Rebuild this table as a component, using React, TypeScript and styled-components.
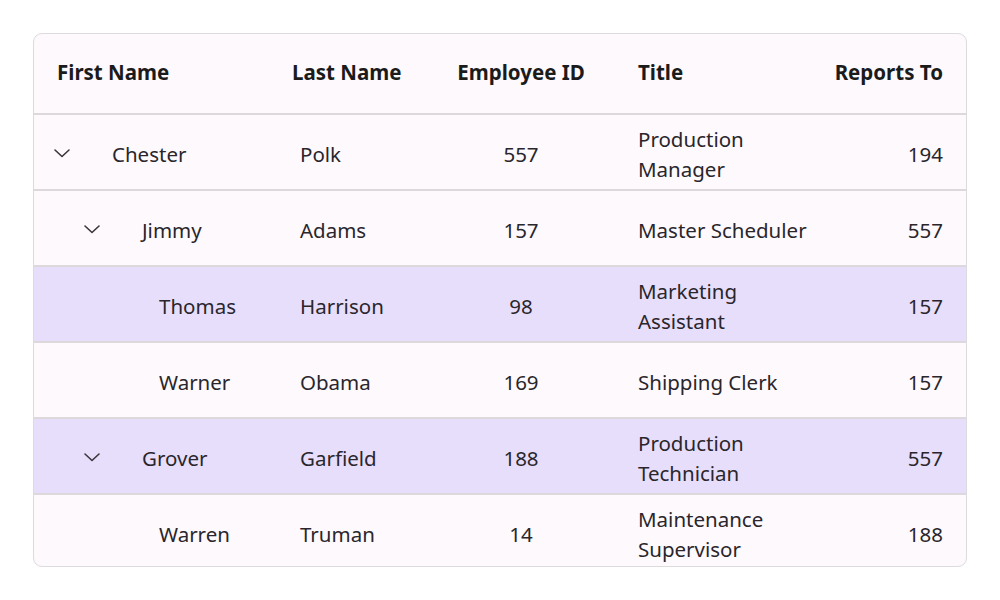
import React from "react";
import styled, { createGlobalStyle } from "styled-components";

const Global = createGlobalStyle`
  html, body { margin: 0; padding: 0; background: #ffffff; }
  body { font-family: "Noto Sans", "Open Sans", sans-serif; }
`;

const Page = styled.div`
  padding: 33px;
`;

const Card = styled.div`
  width: 934px;
  height: 534px;
  box-sizing: border-box;
  border: 1px solid #dedbde;
  border-radius: 9px;
  background: #fdf9fd;
  overflow: hidden;
`;

const cols = "235px 163px 132px 236px 120px";

const HeaderRow = styled.div`
  display: grid;
  grid-template-columns: ${cols};
  align-items: center;
  padding: 0 23px 4px;
  height: 75px;
  border-bottom: 2px solid #dcd8dc;
  font-weight: 700;
  font-size: 20.5px;
  color: #1b1b1b;
`;

const HeadCell = styled.div<{ $align?: string; $pl?: number }>`
  text-align: ${(p) => p.$align || "left"};
  padding-left: ${(p) => p.$pl || 0}px;
  white-space: nowrap;
`;

const Row = styled.div<{ $sel?: boolean }>`
  display: grid;
  grid-template-columns: ${cols};
  align-items: center;
  padding: 4px 23px 0;
  height: 70px;
  border-bottom: 2px solid #dcd8dc;
  background: ${(p) => (p.$sel ? "#e7defc" : "transparent")};
  font-size: 20.5px;
  line-height: 30px;
  color: #2a262b;
  &:last-child { border-bottom: none; }
`;

const Cell = styled.div<{ $align?: string; $pl?: number }>`
  text-align: ${(p) => p.$align || "left"};
  padding-left: ${(p) => p.$pl || 0}px;
`;

const NameCell = styled.div<{ $indent: number }>`
  display: flex;
  align-items: center;
  padding-left: ${(p) => p.$indent}px;
`;

const Expander = styled.span`
  display: inline-flex;
  align-items: center;
  justify-content: center;
  width: 30px;
  margin-left: -10px;
  margin-right: 35px;
  margin-top: -2px;
  color: #3a363b;
`;

const Chevron = () => (
  <svg width="18" height="10" viewBox="0 0 18 10" fill="none">
    <path d="M2 2 L9 8.5 L16 2" stroke="currentColor" strokeWidth="1.6" strokeLinecap="round" strokeLinejoin="round" />
  </svg>
);

type R = { first: string; last: string; id: number; title: string; rep: number; level: number; exp: boolean; sel?: boolean };

const rows: R[] = [
  { first: "Chester", last: "Polk", id: 557, title: "Production Manager", rep: 194, level: 0, exp: true },
  { first: "Jimmy", last: "Adams", id: 157, title: "Master Scheduler", rep: 557, level: 1, exp: true },
  { first: "Thomas", last: "Harrison", id: 98, title: "Marketing Assistant", rep: 157, level: 2, exp: false, sel: true },
  { first: "Warner", last: "Obama", id: 169, title: "Shipping Clerk", rep: 157, level: 2, exp: false },
  { first: "Grover", last: "Garfield", id: 188, title: "Production Technician", rep: 557, level: 1, exp: true, sel: true },
  { first: "Warren", last: "Truman", id: 14, title: "Maintenance Supervisor", rep: 188, level: 2, exp: false },
];

const TitleText = styled.div`
  max-width: 180px;
`;

export default function App() {
  return (
    <>
      <Global />
      <Page>
        <Card>
          <HeaderRow>
            <HeadCell>First Name</HeadCell>
            <HeadCell>Last Name</HeadCell>
            <HeadCell $align="center">Employee ID</HeadCell>
            <HeadCell $pl={51}>Title</HeadCell>
            <HeadCell $align="right">Reports To</HeadCell>
          </HeaderRow>
          {rows.map((r) => (
            <Row key={r.first} $sel={r.sel}>
              <NameCell $indent={r.exp ? r.level * 30 : r.level * 30 + 42}>
                {r.exp && (
                  <Expander>
                    <Chevron />
                  </Expander>
                )}
                <span>{r.first}</span>
              </NameCell>
              <Cell $pl={8}>{r.last}</Cell>
              <Cell $align="center">{r.id}</Cell>
              <Cell $pl={51}>
                <TitleText>{r.title}</TitleText>
              </Cell>
              <Cell $align="right">{r.rep}</Cell>
            </Row>
          ))}
        </Card>
      </Page>
    </>
  );
}
